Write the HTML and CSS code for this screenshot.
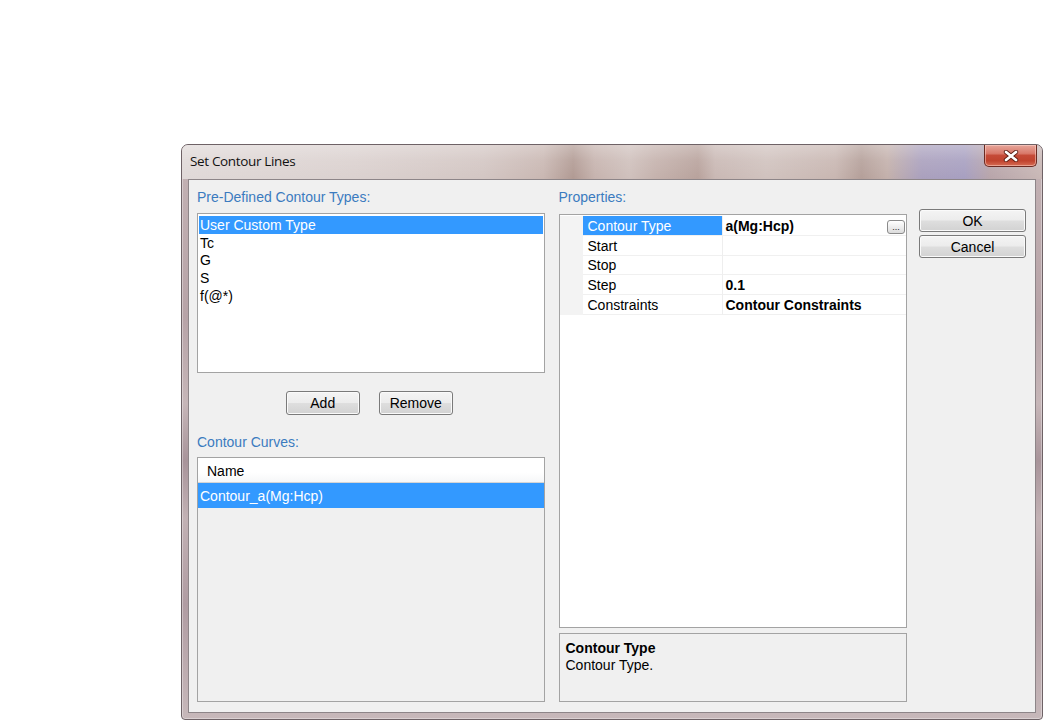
FILE: index.html
```
<!DOCTYPE html>
<html>
<head>
<meta charset="utf-8">
<title>Set Contour Lines</title>
<link rel="stylesheet" href="styles.css">
</head>
<body>
<div class="window">
  <div class="titlebar">
    <span class="title">Set Contour Lines</span>
    <div class="close">
      <svg width="16" height="12" viewBox="0 0 16 12">
        <path d="M3 2 L13 10 M13 2 L3 10" stroke="#5a1a10" stroke-width="4.4" stroke-linecap="round"/>
        <path d="M3 2 L13 10 M13 2 L3 10" stroke="#ffffff" stroke-width="2.8" stroke-linecap="round"/>
      </svg>
    </div>
  </div>
  <div class="client">
    <div class="col-left">
      <div class="label">Pre-Defined Contour Types:</div>
      <ul class="listbox">
        <li class="sel">User Custom Type</li>
        <li>Tc</li>
        <li>G</li>
        <li>S</li>
        <li>f(@*)</li>
      </ul>
      <div class="btnrow">
        <button class="btn small">Add</button>
        <button class="btn small">Remove</button>
      </div>
      <div class="label label2">Contour Curves:</div>
      <div class="listview">
        <div class="lv-header"><span class="lv-col">Name</span></div>
        <div class="lv-row sel">Contour_a(Mg:Hcp)</div>
      </div>
    </div>
    <div class="col-right">
      <div class="label">Properties:</div>
      <div class="propgrid">
        <div class="prow">
          <div class="pmargin"></div>
          <div class="pname sel">Contour Type</div>
          <div class="pvalue"><b>a(Mg:Hcp)</b><span class="ellipsis">...</span></div>
        </div>
        <div class="prow">
          <div class="pmargin"></div>
          <div class="pname">Start</div>
          <div class="pvalue"></div>
        </div>
        <div class="prow">
          <div class="pmargin"></div>
          <div class="pname">Stop</div>
          <div class="pvalue"></div>
        </div>
        <div class="prow">
          <div class="pmargin"></div>
          <div class="pname">Step</div>
          <div class="pvalue"><b>0.1</b></div>
        </div>
        <div class="prow">
          <div class="pmargin"></div>
          <div class="pname">Constraints</div>
          <div class="pvalue"><b>Contour Constraints</b></div>
        </div>
      </div>
      <div class="desc">
        <div class="desc-title">Contour Type</div>
        <div class="desc-text">Contour Type.</div>
      </div>
    </div>
    <div class="col-buttons">
      <button class="btn dlg">OK</button>
      <button class="btn dlg">Cancel</button>
    </div>
  </div>
</div>
</body>
</html>
```
FILE: styles.css
```
html, body {
  margin: 0;
  padding: 0;
  background: #ffffff;
}
body {
  font-family: "Liberation Sans", Arial, sans-serif;
  font-size: 14px;
  color: #000;
}
.window {
  margin: 144px 0 0 181px;
  width: 862px;
  height: 576px;
  box-sizing: border-box;
  border: 1px solid #6e6266;
  border-radius: 7px 7px 4px 4px;
  padding: 0 6px 6px 6px;
  display: flex;
  flex-direction: column;
  background:
    linear-gradient(to bottom, #c4b3b5 0%, #b7a3a7 30%, #c6b6b8 45%, #a8949a 55%, #c2b1b4 65%, #b09ca2 80%, #c7b8ba 100%);
  box-shadow: inset 0 0 0 1px rgba(255,255,255,0.35);
}
.titlebar {
  height: 34px;
  display: flex;
  align-items: flex-start;
  justify-content: space-between;
  margin: 0 -6px;
  padding: 0 6px;
  background:
    linear-gradient(to bottom, rgba(255,255,255,0.3) 0%, rgba(255,255,255,0.1) 45%, rgba(255,255,255,0) 100%),
    linear-gradient(to right, #e0d9d8 0%, #dbd1cf 20%, #d3c6c3 35%, #c9b7b2 42%, #b19a93 45.5%, #c6b3ae 48%, #cfc0bc 52%, #c5b2ad 55%, #b8a29c 60%, #c9b8b4 62%, #d0c2be 68%, #c8b6b1 76%, #b49f99 79%, #c3b0ab 82%, #aaa0bd 86%, #a79fc0 91%, #b8a5aa 94%, #c9b8b6 100%);
  border-radius: 6px 6px 0 0;
}
.title {
  font-family: "Open Sans", "Noto Sans", sans-serif;
  font-size: 13.5px;
  letter-spacing: -0.35px;
  line-height: 18px;
  padding: 7px 0 0 2px;
  color: #111;
}
.close {
  width: 53px;
  height: 22px;
  box-sizing: border-box;
  border: 1px solid #6b2a22;
  border-top: none;
  border-radius: 0 0 5px 5px;
  background: linear-gradient(to bottom, #e7a69b 0%, #d9796a 40%, #c54a37 50%, #c0432e 75%, #d66d55 100%);
  box-shadow: inset 0 0 0 1px rgba(255,220,210,0.5);
  display: flex;
  align-items: center;
  justify-content: center;
  margin-right: -1px;
}
.client {
  flex: 1;
  border: 1px solid #8d8588;
  background: #f0f0f0;
  display: flex;
  padding: 9px 9px 10px 8px;
}
.label {
  color: #3b7bbf;
  line-height: 17px;
  height: 17px;
}
.col-left {
  width: 348px;
  display: flex;
  flex-direction: column;
}
.col-left > .label {
  margin-bottom: 7px;
}
.listbox {
  list-style: none;
  margin: 0;
  padding: 2px 1px;
  height: 160px;
  box-sizing: border-box;
  background: #fff;
  border: 1px solid #a3a3a3;
}
.listbox li {
  height: 17.7px;
  line-height: 19px;
  padding-left: 1px;
}
.listbox li.sel {
  line-height: 18px;
}
.listbox li.sel,
.lv-row.sel,
.pname.sel {
  background: #3399ff;
  color: #fff;
}
.btnrow {
  margin-top: 18px;
  display: flex;
  justify-content: center;
  gap: 19px;
  padding-right: 3px;
}
.btn {
  font-family: "Liberation Sans", Arial, sans-serif;
  font-size: 14px;
  color: #000;
  border: 1px solid #7a7a7a;
  border-radius: 3px;
  background: linear-gradient(to bottom, #f4f4f4 0%, #ececec 48%, #dedede 52%, #d2d2d2 100%);
  box-shadow: inset 0 0 0 1px #fafafa;
  padding: 0;
  box-sizing: border-box;
}
.btn.small {
  width: 74px;
  height: 24px;
}
.col-left > .label2 {
  margin-top: 19px;
  margin-bottom: 6px;
}
.listview {
  flex: 1;
  border: 1px solid #a3a3a3;
  background: #f0f0f0;
  display: flex;
  flex-direction: column;
}
.lv-header {
  height: 25px;
  box-sizing: border-box;
  padding-top: 2px;
  background: linear-gradient(to bottom, #ffffff 0%, #ffffff 60%, #f6f7f8 100%);
  border-bottom: 1px solid #d5d5d5;
  display: flex;
  align-items: center;
}
.lv-col {
  padding-left: 9px;
}
.lv-row {
  height: 25px;
  line-height: 27px;
  padding-left: 2px;
}
.col-right {
  width: 349px;
  margin-left: 14px;
  display: flex;
  flex-direction: column;
}
.col-right > .label {
  margin-bottom: 8px;
}
.propgrid {
  flex: 1;
  border: 1px solid #a3a3a3;
  background: #fff;
  padding-top: 1px;
}
.prow {
  display: grid;
  grid-template-columns: 23px 140px 1fr;
  height: 19.7px;
}
.pmargin {
  background: #f3f3f3;
}
.pname {
  box-sizing: border-box;
  line-height: 17px;
  padding: 2px 0 0 5px;
  border-right: 1px solid #eeeeee;
  border-bottom: 1px solid #f0f0f0;
  white-space: nowrap;
}
.pvalue {
  box-sizing: border-box;
  line-height: 17px;
  padding: 2px 0 0 3px;
  border-bottom: 1px solid #f0f0f0;
  display: flex;
  align-items: center;
  justify-content: space-between;
  white-space: nowrap;
}
.ellipsis {
  width: 18px;
  height: 14px;
  box-sizing: border-box;
  border: 1px solid #8a8a8a;
  border-radius: 3px;
  background: linear-gradient(to bottom, #ffffff, #dcdcdc);
  font-size: 9px;
  line-height: 12px;
  text-align: center;
  margin-right: 1px;
  color: #222;
}
.desc {
  margin-top: 5px;
  height: 69px;
  box-sizing: border-box;
  border: 1px solid #a3a3a3;
  background: #f0f0f0;
  padding: 6px 6px;
}
.desc-title {
  font-weight: bold;
  line-height: 17px;
}
.desc-text {
  line-height: 17px;
}
.col-buttons {
  width: 107px;
  margin-left: 12px;
  padding-top: 20px;
  display: flex;
  flex-direction: column;
  gap: 3px;
}
.btn.dlg {
  width: 107px;
  height: 23px;
}
```
